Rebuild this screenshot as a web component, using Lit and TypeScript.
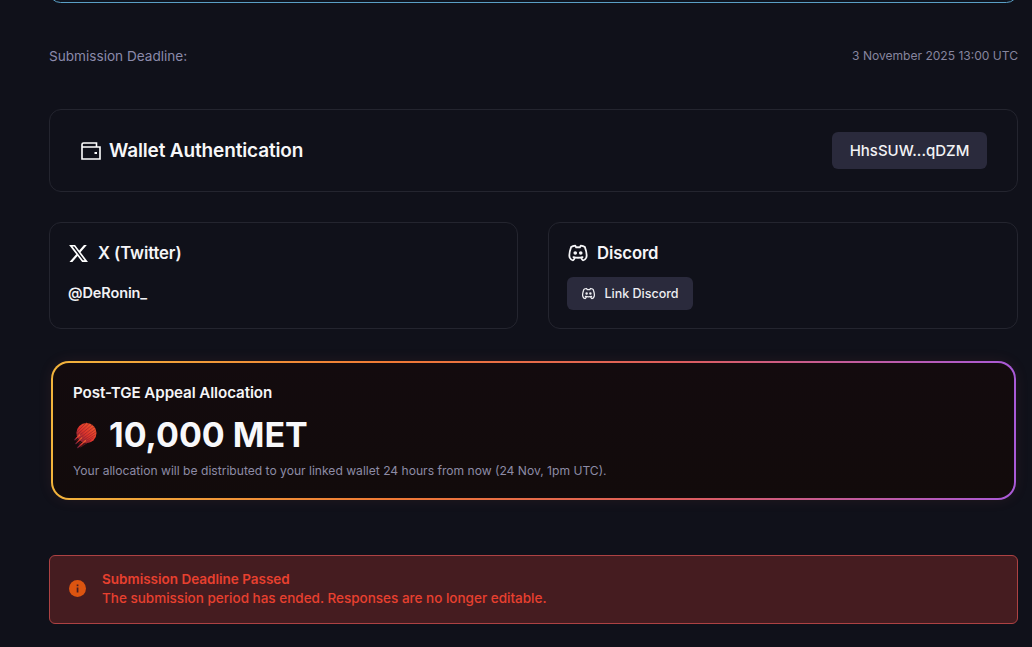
import { LitElement, html, css, svg } from "lit";
import { customElement } from "lit/decorators.js";

const discord = (size: number) => html`<svg class="dc" width=${size} height=${size} viewBox="0 0 24 24" fill="none" stroke="currentColor" stroke-width="2" stroke-linecap="round" stroke-linejoin="round">
  <path d="M8 12a1 1 0 1 0 2 0a1 1 0 0 0 -2 0"/><path d="M14 12a1 1 0 1 0 2 0a1 1 0 0 0 -2 0"/>
  <path d="M15.5 17c0 1 1.5 3 2 3c1.5 0 2.833 -1.667 3.5 -3c.667 -1.667 .5 -5.833 -1.5 -11.5c-1.457 -1.015 -3 -1.34 -4.5 -1.5l-.972 1.923a11.913 11.913 0 0 0 -4.053 0l-.975 -1.923c-1.5 .16 -3.043 .485 -4.5 1.5c-2 5.667 -2.167 9.833 -1.5 11.5c.667 1.333 2 3 3.5 3c.5 0 2 -2 2 -3"/>
  <path d="M7 16.5c3.5 1 6.5 1 10 0"/>
</svg>`;

const stripes = [
  [4, 12, 14, 2], [4, 15, 17, 3], [3.5, 18, 20, 4.5], [4, 20.5, 22, 6.5], [5, 22.5, 23.5, 9], [6, 24, 23.5, 12], [7, 25, 23, 15], [7, 27, 21, 18], [8, 27.5, 18, 21],
];

@customElement("app-root")
export class AppRoot extends LitElement {
  static styles = css`
    :host { display: block; width: 1032px; height: 647px; overflow: hidden; background: #10111a; color: #fff; font-family: Inter, "Liberation Sans", sans-serif; }
    .page { padding: 0 14px 0 49px; display: flex; flex-direction: column; }
    .top { height: 23px; margin-top: -20px; box-sizing: border-box; border: 1px solid #5a9fc5; border-radius: 12px; background: #0f1520; }
    .deadline { display: flex; justify-content: space-between; align-items: center; height: 21px; margin-top: 42px; color: #8b8aaa; font-size: 13.6px; }
    .deadline .date { font-size: 12.05px; color: #86859e; }
    .card { box-sizing: border-box; border: 1px solid #24252f; border-radius: 12px; background: #10111a; }
    .wallet { margin-top: 43px; height: 83px; display: flex; align-items: center; justify-content: space-between; padding: 0 30px 0 31px; }
    .wtitle { display: flex; align-items: center; gap: 8px; font-size: 19px; font-weight: 600; color: #f7f7f8; letter-spacing: -0.15px; }
    .addr { width: 155px; height: 37px; display: flex; align-items: center; justify-content: center; border-radius: 6px; background: #2a2a3c; font-size: 15px; font-weight: 500; color: #f2f2f5; }
    .socials { margin-top: 30px; display: grid; grid-template-columns: 469px 470px; gap: 30px; }
    .social { height: 107px; padding: 19px 18px 0; }
    .stitle { height: 22px; display: flex; align-items: center; gap: 8px; font-size: 16.7px; font-weight: 600; color: #f5f5f7; letter-spacing: -0.1px; }
    .stitle.x { gap: 9px; }
    .handle { margin-top: 20px; font-size: 14.5px; font-weight: 600; color: #f2f2f5; letter-spacing: -0.1px; }
    .link { margin-top: 13px; width: 126px; height: 33px; display: flex; align-items: center; justify-content: center; gap: 8px; border-radius: 6px; background: #2a2a3c; font-size: 12.5px; font-weight: 500; color: #eeeef2; }
    .dc { display: block; flex: none; }
    .appeal {
      margin: 32px 2px 0; height: 139px; box-sizing: border-box; padding: 20px 20px 0; border: 2px solid transparent; border-radius: 18px;
      background: linear-gradient(#130b0e, #120b0b) padding-box, linear-gradient(90deg, #f2b43c 0%, #f07a35 35%, #dd5d5d 65%, #a95ad8 100%) border-box;
      box-shadow: 0 0 14px rgba(200, 90, 80, .10);
    }
    .atitle { font-size: 15.2px; font-weight: 600; color: #f5f5f7; line-height: 20px; letter-spacing: -0.1px; }
    .amount { margin-top: 10px; display: flex; align-items: center; gap: 12px; height: 42px; font-size: 34px; font-weight: 700; color: #f8f8fa; }
    .coin { display: block; flex: none; }
    .anote { margin-top: 7px; font-size: 12.1px; color: #8d8ba6; line-height: 18px; }
    .alert { margin-top: 55px; height: 69px; box-sizing: border-box; display: flex; align-items: center; gap: 16px; padding: 0 19px 2px; border: 1px solid #ad4243; border-radius: 6px; background: #451c20; color: #e8402f; font-size: 13.5px; font-weight: 600; line-height: 19px; }
    .alert .sub { font-weight: 500; }
    .alert svg { display: block; flex: none; }
  `;

  render() {
    return html`<div class="page">
      <div class="top"></div>
      <div class="deadline"><span>Submission Deadline:</span><span class="date">3 November 2025 13:00 UTC</span></div>
      <section class="card wallet">
        <div class="wtitle">
          <svg width="20" height="18" viewBox="0 0 20 18" fill="none" stroke="#fff" stroke-width="1.6"><path d="M1 5V17H19V5H1V2.5Q1 1 2.5 1H15.5V5"/><path d="M13.5 11H16" stroke-width="2"/></svg>
          Wallet Authentication
        </div>
        <div class="addr">HhsSUW...qDZM</div>
      </section>
      <div class="socials">
        <section class="card social">
          <div class="stitle x">
            <svg width="21" height="21" viewBox="0 0 24 24" fill="#fff"><path d="M18.24 2.25h3.31l-7.23 8.26 8.5 11.24h-6.66l-5.21-6.82-5.97 6.82H1.68l7.73-8.84L1.25 2.25h6.83l4.71 6.23zm-1.16 17.52h1.83L7.08 4.13H5.12z"/></svg>
            X (Twitter)
          </div>
          <div class="handle">@DeRonin_</div>
        </section>
        <section class="card social">
          <div class="stitle">${discord(22)} Discord</div>
          <div class="link">${discord(15)} Link Discord</div>
        </section>
      </div>
      <section class="appeal">
        <div class="atitle">Post-TGE Appeal Allocation</div>
        <div class="amount">
          <svg class="coin" width="24" height="29" viewBox="0 0 25 29">
            <defs><linearGradient id="cg" x1="1" y1="0" x2="0" y2="1"><stop offset="0" stop-color="#f2602c"/><stop offset=".55" stop-color="#dc342c"/><stop offset="1" stop-color="#6b1f3e"/></linearGradient></defs>
            <g stroke="url(#cg)" stroke-width="2.1" stroke-linecap="round" fill="none">
              <circle cx="14" cy="13" r="10.5" fill="url(#cg)" stroke="none"/>
              ${stripes.map(([a, b, c, d]) => svg`<line x1=${a} y1=${b} x2=${c} y2=${d} stroke="#8c2028" stroke-width=".6"/>`)}
              <line x1="2" y1="20" x2="7" y2="15" stroke-width="1.4"/>
              <line x1="3" y1="24" x2="9" y2="18" stroke-width="1.4"/>
              <line x1="5" y1="28" x2="13" y2="21" stroke-width="1.4"/>
            </g>
          </svg>
          10,000 MET
        </div>
        <div class="anote">Your allocation will be distributed to your linked wallet 24 hours from now (24 Nov, 1pm UTC).</div>
      </section>
      <section class="alert">
        <svg width="17" height="17" viewBox="0 0 17 17"><circle cx="8.5" cy="8.5" r="8.5" fill="#dc5410"/><rect x="7.7" y="7.5" width="1.7" height="5" fill="#451c22"/><rect x="7.7" y="4.5" width="1.7" height="1.7" fill="#451c22"/></svg>
        <div><div>Submission Deadline Passed</div><div class="sub">The submission period has ended. Responses are no longer editable.</div></div>
      </section>
    </div>`;
  }
}
